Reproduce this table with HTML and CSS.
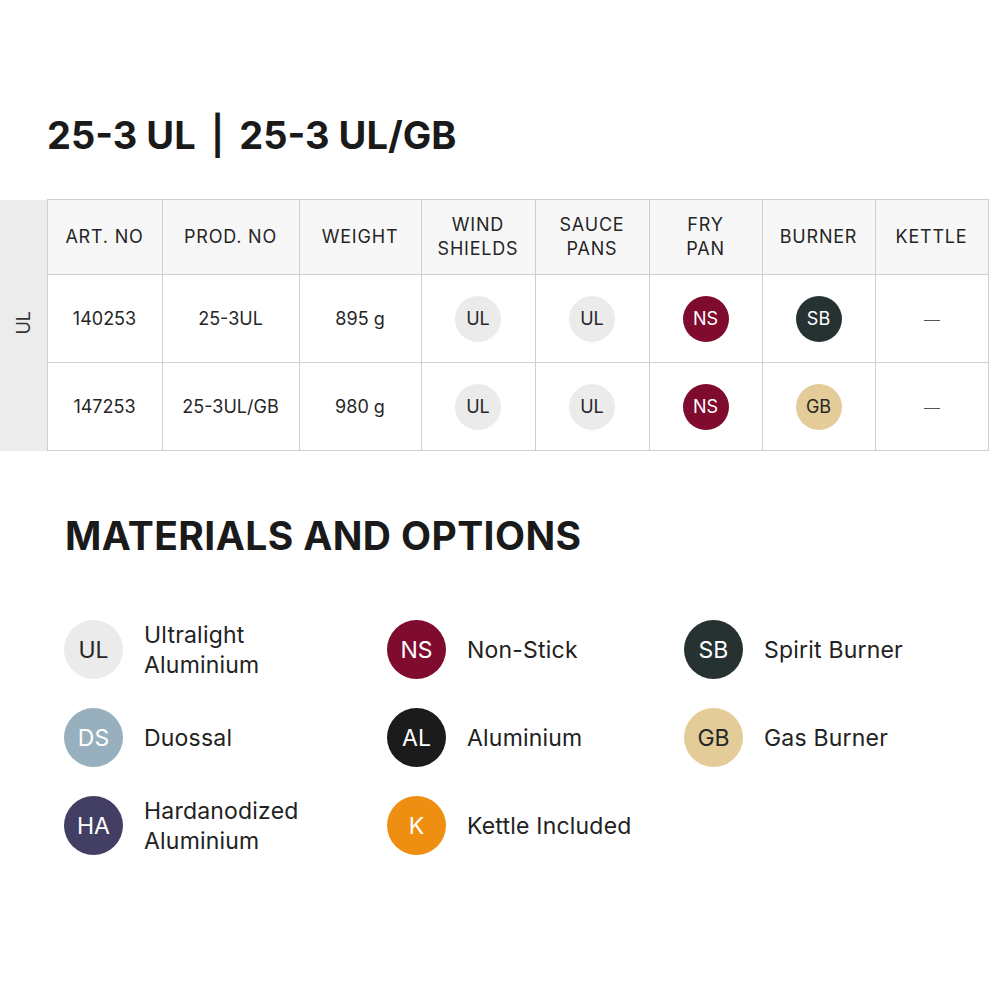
FILE: index.html
```html
<!DOCTYPE html>
<html>
<head>
<meta charset="utf-8">
<link rel="stylesheet" href="styles.css">
</head>
<body>
<h1 class="title">25-3 UL <span class="sep">|</span> 25-3 UL/GB</h1>

<table class="spec">
  <colgroup>
    <col class="c-side"><col class="c-art"><col class="c-prod"><col class="c-weight">
    <col class="c-opt"><col class="c-opt"><col class="c-opt2"><col class="c-opt2"><col class="c-opt2">
  </colgroup>
  <tr class="head">
    <td class="side" rowspan="3"><span class="side-label">UL</span></td>
    <th>ART. NO</th>
    <th>PROD. NO</th>
    <th>WEIGHT</th>
    <th>WIND<br>SHIELDS</th>
    <th>SAUCE<br>PANS</th>
    <th>FRY<br>PAN</th>
    <th>BURNER</th>
    <th>KETTLE</th>
  </tr>
  <tr class="row">
    <td>140253</td>
    <td>25-3UL</td>
    <td>895 g</td>
    <td><span class="dot sm ul">UL</span></td>
    <td><span class="dot sm ul">UL</span></td>
    <td><span class="dot sm ns">NS</span></td>
    <td><span class="dot sm sb">SB</span></td>
    <td><span class="dash"></span></td>
  </tr>
  <tr class="row">
    <td>147253</td>
    <td>25-3UL/GB</td>
    <td>980 g</td>
    <td><span class="dot sm ul">UL</span></td>
    <td><span class="dot sm ul">UL</span></td>
    <td><span class="dot sm ns">NS</span></td>
    <td><span class="dot sm gb">GB</span></td>
    <td><span class="dash"></span></td>
  </tr>
</table>

<h2 class="subtitle">MATERIALS AND OPTIONS</h2>

<div class="legend">
  <div class="item"><span class="dot lg ul">UL</span><span class="label">Ultralight<br>Aluminium</span></div>
  <div class="item"><span class="dot lg ns">NS</span><span class="label">Non-Stick</span></div>
  <div class="item"><span class="dot lg sb">SB</span><span class="label">Spirit Burner</span></div>
  <div class="item"><span class="dot lg ds">DS</span><span class="label">Duossal</span></div>
  <div class="item"><span class="dot lg al">AL</span><span class="label">Aluminium</span></div>
  <div class="item"><span class="dot lg gb">GB</span><span class="label">Gas Burner</span></div>
  <div class="item"><span class="dot lg ha">HA</span><span class="label">Hardanodized<br>Aluminium</span></div>
  <div class="item"><span class="dot lg k">K</span><span class="label">Kettle Included</span></div>
</div>
</body>
</html>
```

FILE: styles.css
```css
html, body {
  margin: 0;
  padding: 0;
  background: #ffffff;
}
body {
  font-family: "Inter", "Liberation Sans", sans-serif;
  color: #1e1e1e;
}
.title {
  margin: 0 0 41px 0;
  padding: 112px 0 0 47px;
  font-size: 38px;
  line-height: 46px;
  font-weight: 700;
  letter-spacing: 0;
  color: #1a1a1a;
}
.sep {
  font-weight: 600;
  margin: 0 6px;
}
.spec {
  border-collapse: collapse;
  table-layout: fixed;
  width: 988px;
  font-size: 18px;
  color: #262626;
}
.c-side { width: 47px; }
.c-art { width: 115px; }
.c-prod { width: 137px; }
.c-weight { width: 122px; }
.c-opt { width: 114px; }
.c-opt2 { width: 113px; }
.spec th, .spec td {
  border: 1px solid #cfcfcf;
  text-align: center;
  vertical-align: middle;
  padding: 0;
}
.spec th {
  background: #f7f7f7;
  font-weight: 400;
  height: 74px;
  line-height: 24px;
  letter-spacing: 0.8px;
}
.spec .row td {
  height: 87px;
}
.spec td.side {
  background: #ececec;
  border: none;
  border-right: 1px solid #cfcfcf;
}
.side-label {
  display: inline-block;
  writing-mode: vertical-rl;
  transform: rotate(180deg);
  font-size: 18px;
  color: #333;
}
.dot {
  display: inline-flex;
  align-items: center;
  justify-content: center;
  border-radius: 50%;
  box-sizing: border-box;
}
.dot.sm {
  width: 46px;
  height: 46px;
  font-size: 18px;
}
.dot.lg {
  width: 59px;
  height: 59px;
  font-size: 23px;
  flex: none;
}
.ul { background: #ebebeb; color: #262626; }
.ns { background: #7f0b2e; color: #ffffff; }
.sb { background: #263232; color: #ffffff; }
.gb { background: #e4cc98; color: #262626; }
.ds { background: #98b0bd; color: #ffffff; }
.al { background: #1b1b1b; color: #ffffff; }
.ha { background: #433f64; color: #ffffff; }
.k { background: #ee8f12; color: #ffffff; }
.dash {
  display: inline-block;
  width: 16px;
  height: 1px;
  background: #555;
  vertical-align: middle;
}
.subtitle {
  margin: 0;
  padding: 62px 0 0 65px;
  font-size: 39px;
  line-height: 46px;
  font-weight: 700;
  letter-spacing: 0.4px;
  color: #1a1a1a;
}
.legend {
  display: grid;
  grid-template-columns: 323px 297px 300px;
  grid-auto-rows: 88px;
  padding: 61px 0 0 64px;
}
.item {
  display: flex;
  align-items: center;
  gap: 21px;
  height: 59px;
}
.label {
  font-size: 23px;
  line-height: 30px;
  color: #222;
  letter-spacing: 0.2px;
}
```
